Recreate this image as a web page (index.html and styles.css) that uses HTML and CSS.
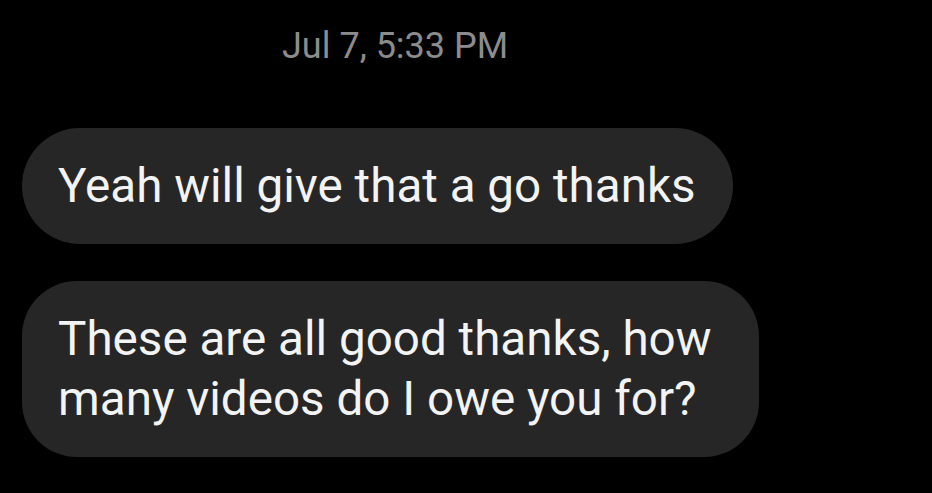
FILE: index.html
```html
<!DOCTYPE html>
<html lang="en">

<head>
    <meta charset="UTF-8">
    <title>Messages</title>
    <link rel="stylesheet" href="styles.css">
</head>

<body>

    <div class="thread">
        <div class="time">Jul 7, 5:33 PM</div>
        <div class="bubble">Yeah will give that a go thanks</div>
        <div class="bubble multi">These are all good thanks, how<br>many videos do I owe you for?</div>
    </div>

</body>

</html>
```

FILE: styles.css
```css
body,
html {
    margin: 0;
    height: 100%;
    background-color: #000;
    font-family: Roboto, "Liberation Sans", sans-serif;
}

.thread {
    display: flex;
    flex-direction: column;
    align-items: flex-start;
    padding: 26px 0 0 22px;
}

.time {
    color: #8c8c8c;
    font-size: 36px;
    line-height: 40px;
    padding-left: 260px;
}

.bubble {
    background-color: #262626;
    color: #f3f3f3;
    font-size: 47.6px;
    line-height: 60px;
    padding: 28px 37px 28px 36px;
    border-radius: 58px;
    margin-top: 62px;
}

.multi {
    margin-top: 37px;
    padding-right: 47px;
    border-radius: 55px;
}
```
